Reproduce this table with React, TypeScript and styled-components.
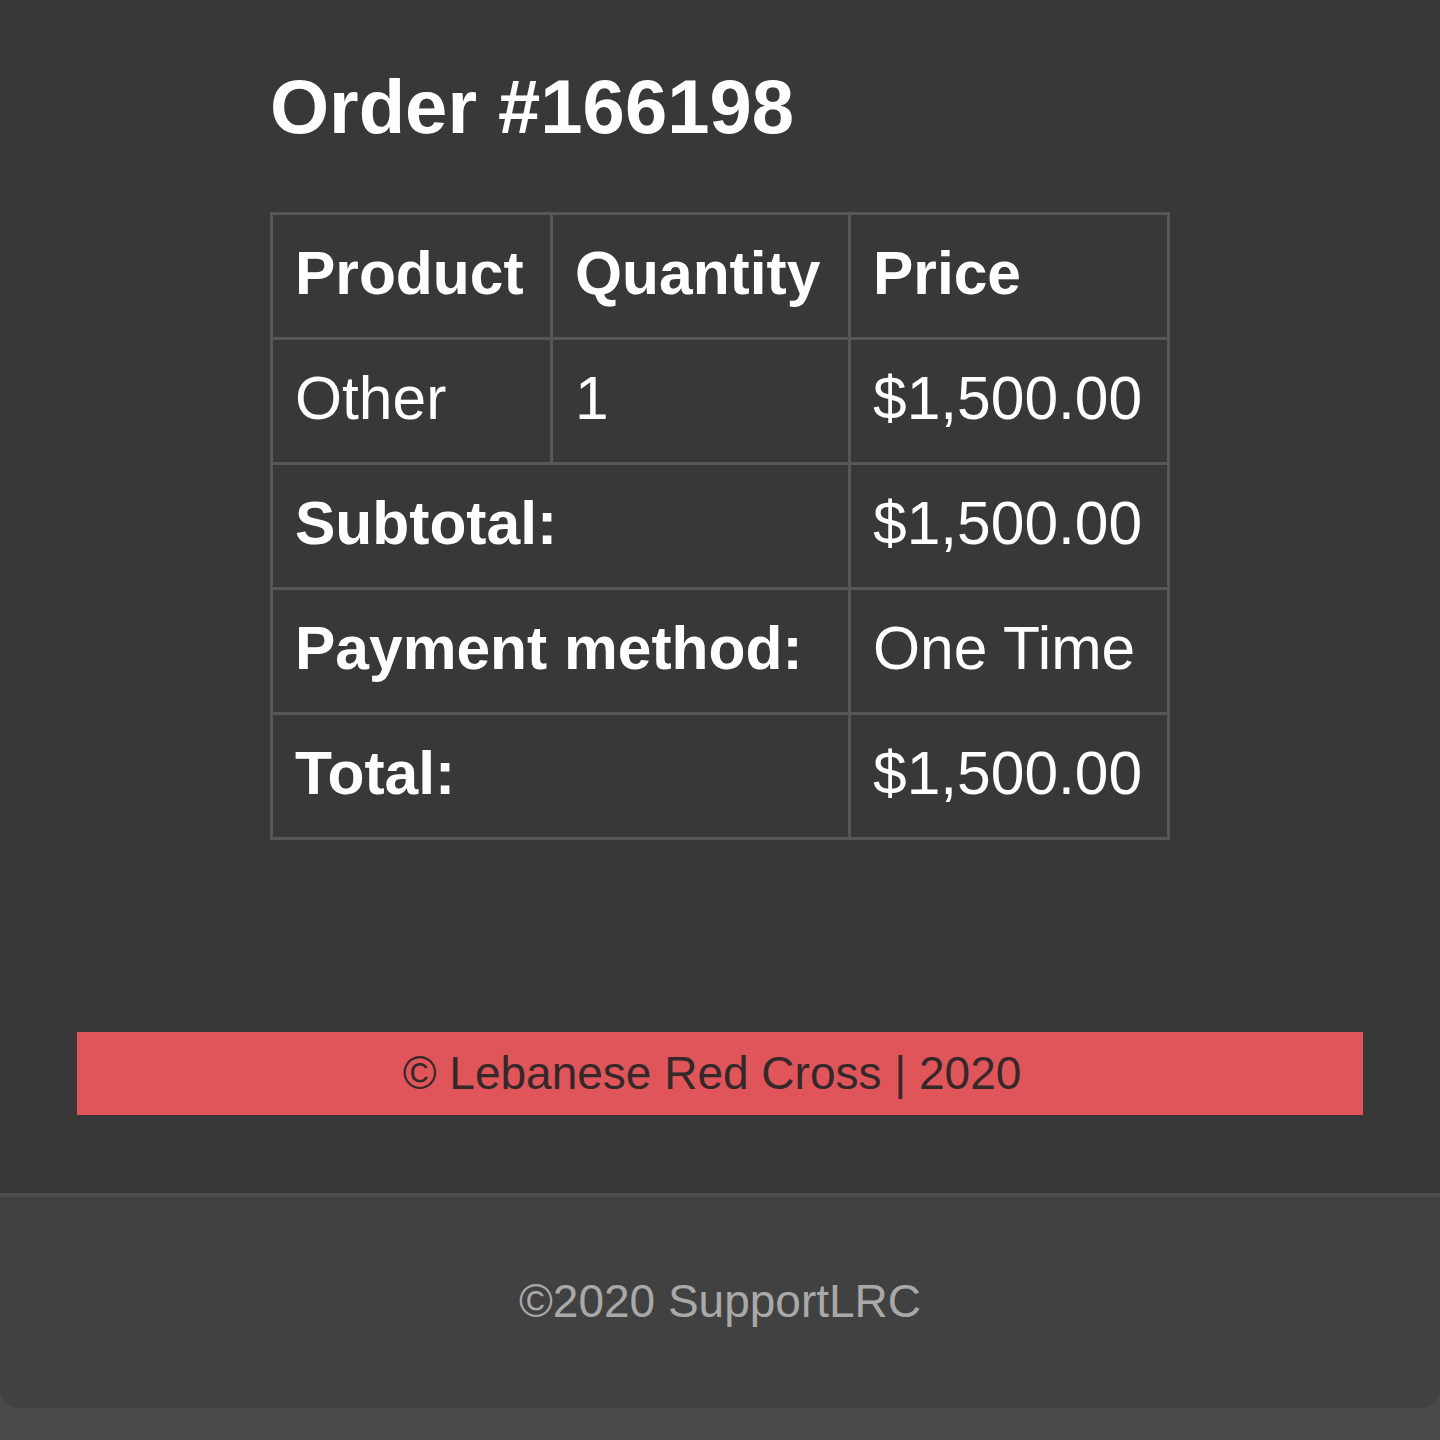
import React from 'react';
import styled, { createGlobalStyle } from 'styled-components';

const GlobalStyle = createGlobalStyle`
  html, body {
    margin: 0;
    padding: 0;
    background: #4a4a4a;
  }
  body {
    font-family: "Liberation Sans", Arial, Helvetica, sans-serif;
  }
`;

const Page = styled.div`
  width: 1440px;
  min-height: 1440px;
  background: #4a4a4a;
  display: flex;
  flex-direction: column;
`;

const Mail = styled.div`
  background: #383838;
  padding: 62px 0 78px;
`;

const Content = styled.div`
  width: 900px;
  margin: 0 auto;
`;

const Title = styled.h1`
  margin: 0 0 61px;
  font-size: 76px;
  line-height: 89px;
  font-weight: 700;
  color: #ffffff;
`;

const OrderTable = styled.table`
  width: 900px;
  table-layout: fixed;
  border-collapse: collapse;
  border: 3px solid #575757;
  color: #ffffff;
  font-size: 60.5px;
  line-height: 70px;
`;

const Cell = styled.td<{ $bold?: boolean }>`
  border: 3px solid #575757;
  padding: 23px 22px 29px;
  text-align: left;
  font-weight: ${p => (p.$bold ? 700 : 400)};
  white-space: nowrap;
`;

const Banner = styled.div`
  margin: 192px 77px 0;
  height: 83px;
  padding-right: 16px;
  background: #e0555a;
  color: #33282a;
  font-size: 46px;
  line-height: 83px;
  text-align: center;
`;

const Footer = styled.div`
  background: #414141;
  border-top: 4px solid #4b4b4b;
  border-radius: 0 0 18px 18px;
  height: 215px;
  padding-bottom: 4px;
  box-sizing: border-box;
  display: flex;
  align-items: center;
  justify-content: center;
  color: #a9a9a9;
  font-size: 46px;
`;

export default function App() {
  return (
    <>
      <GlobalStyle />
      <Page>
        <Mail>
          <Content>
            <Title>Order #166198</Title>
            <OrderTable>
              <colgroup>
                <col style={{ width: 280 }} />
                <col style={{ width: 298 }} />
                <col />
              </colgroup>
              <thead>
                <tr>
                  <Cell as="th" $bold>Product</Cell>
                  <Cell as="th" $bold>Quantity</Cell>
                  <Cell as="th" $bold>Price</Cell>
                </tr>
              </thead>
              <tbody>
                <tr>
                  <Cell>Other</Cell>
                  <Cell>1</Cell>
                  <Cell>$1,500.00</Cell>
                </tr>
              </tbody>
              <tfoot>
                <tr>
                  <Cell as="th" colSpan={2} $bold>Subtotal:</Cell>
                  <Cell>$1,500.00</Cell>
                </tr>
                <tr>
                  <Cell as="th" colSpan={2} $bold>Payment method:</Cell>
                  <Cell>One Time</Cell>
                </tr>
                <tr>
                  <Cell as="th" colSpan={2} $bold>Total:</Cell>
                  <Cell>$1,500.00</Cell>
                </tr>
              </tfoot>
            </OrderTable>
          </Content>
          <Banner>© Lebanese Red Cross | 2020</Banner>
        </Mail>
        <Footer>©2020 SupportLRC</Footer>
      </Page>
    </>
  );
}
